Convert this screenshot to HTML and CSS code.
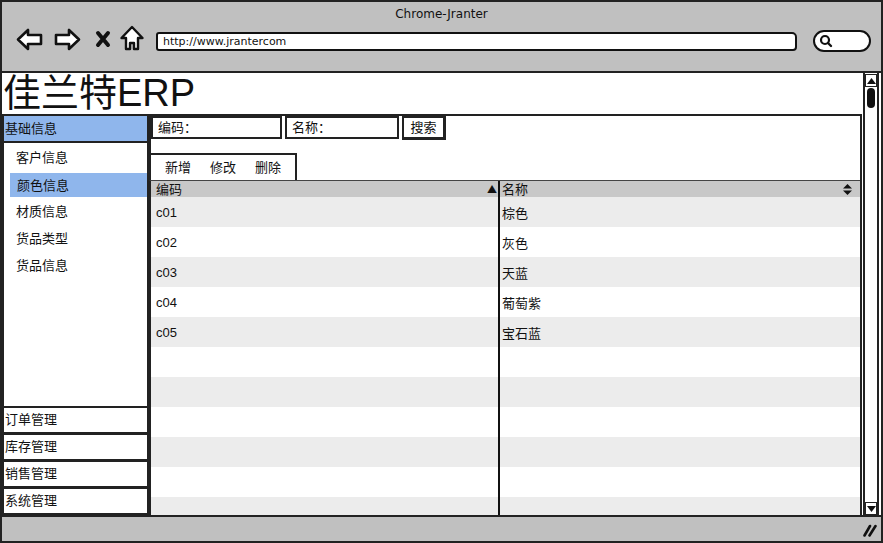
FILE: index.html
```html
<!DOCTYPE html>
<html lang="zh">
<head>
<meta charset="utf-8">
<title>Chrome-Jranter</title>
<link rel="stylesheet" href="styles.css">
</head>
<body>
<div class="window">
  <header class="titlebar">
    <div class="wintitle">Chrome-Jranter</div>
    <div class="navrow">
      <svg class="ic-arrow" width="27" height="23" viewBox="0 0 27 23"><polygon points="2,11.5 12,2 12,7 25,7 25,16 12,16 12,21" fill="#fff" stroke="#111" stroke-width="2.6" stroke-linejoin="round"/></svg>
      <svg class="ic-arrow fwd" width="27" height="23" viewBox="0 0 27 23"><polygon points="25,11.5 15,2 15,7 2,7 2,16 15,16 15,21" fill="#fff" stroke="#111" stroke-width="2.6" stroke-linejoin="round"/></svg>
      <svg class="ic-x" width="16" height="18" viewBox="0 0 16 18"><path d="M3 3 L13 15 M13 3 L3 15" stroke="#111" stroke-width="4" stroke-linecap="round"/></svg>
      <svg class="ic-home" width="24" height="26" viewBox="0 0 24 26"><polygon points="12,2 22.5,13 18,13 18,24 14,24 14,18 10,18 10,24 6,24 6,13 1.5,13" fill="#fff" stroke="#111" stroke-width="2.4" stroke-linejoin="round"/></svg>
      <div class="url">http://www.jrantercom</div>
      <div class="searchpill"><svg width="14" height="14" viewBox="0 0 14 14"><circle cx="6" cy="6" r="4" fill="none" stroke="#111" stroke-width="2.2"/><path d="M9 9 L12 12" stroke="#111" stroke-width="2.4" stroke-linecap="round"/></svg></div>
    </div>
  </header>

  <div class="content">
    <div class="page">
      <h1 class="brand">佳兰特ERP</h1>
      <div class="app">
        <nav class="sidebar">
          <div class="group-head active">基础信息</div>
          <ul class="sub">
            <li>客户信息</li>
            <li class="sel">颜色信息</li>
            <li>材质信息</li>
            <li>货品类型</li>
            <li>货品信息</li>
          </ul>
          <div class="group-head">订单管理</div>
          <div class="group-head">库存管理</div>
          <div class="group-head">销售管理</div>
          <div class="group-head">系统管理</div>
        </nav>
        <section class="main">
          <div class="searchrow">
            <div class="field f-code">编码：</div>
            <div class="field f-name">名称：</div>
            <div class="btn-search">搜索</div>
          </div>
          <div class="spacer"></div>
          <div class="toolbar">
            <span>新增</span><span>修改</span><span>删除</span>
          </div>
          <div class="grid">
            <div class="row head">
              <div class="c1">编码<span class="sort">▲</span></div>
              <div class="c2">名称<svg class="updown" width="9" height="11" viewBox="0 0 9 11"><polygon points="4.5,0 9,4.5 0,4.5" fill="#111"/><polygon points="0,6.5 9,6.5 4.5,11" fill="#111"/></svg></div>
            </div>
            <div class="row"><div class="c1">c01</div><div class="c2">棕色</div></div>
            <div class="row"><div class="c1">c02</div><div class="c2">灰色</div></div>
            <div class="row"><div class="c1">c03</div><div class="c2">天蓝</div></div>
            <div class="row"><div class="c1">c04</div><div class="c2">葡萄紫</div></div>
            <div class="row"><div class="c1">c05</div><div class="c2">宝石蓝</div></div>
            <div class="row"><div class="c1"></div><div class="c2"></div></div>
            <div class="row"><div class="c1"></div><div class="c2"></div></div>
            <div class="row"><div class="c1"></div><div class="c2"></div></div>
            <div class="row"><div class="c1"></div><div class="c2"></div></div>
            <div class="row"><div class="c1"></div><div class="c2"></div></div>
            <div class="row"><div class="c1"></div><div class="c2"></div></div>
          </div>
        </section>
      </div>
    </div>
    <div class="vscroll">
      <div class="sb-btn"><svg width="9" height="6" viewBox="0 0 9 6"><polygon points="4.5,0 9,6 0,6" fill="#111"/></svg></div>
      <div class="sb-track"><div class="sb-thumb"></div></div>
      <div class="sb-btn"><svg width="9" height="6" viewBox="0 0 9 6"><polygon points="0,0 9,0 4.5,6" fill="#111"/></svg></div>
    </div>
  </div>

  <footer class="statusbar">
    <svg class="grip" width="14" height="13" viewBox="0 0 14 13"><path d="M1.5 11.5 L7 2 M6.5 11.5 L12.5 2" stroke="#111" stroke-width="2.6" stroke-linecap="round"/></svg>
  </footer>
</div>
</body>
</html>
```

FILE: styles.css
```css
* { box-sizing: border-box; }
html, body { margin: 0; padding: 0; background: #fff; }
body {
  width: 883px;
  height: 543px;
  overflow: hidden;
  font-family: "Noto Sans CJK SC", "Liberation Sans", sans-serif;
  color: #111;
}
.window {
  width: 883px;
  height: 543px;
  border: 2px solid #222;
  display: flex;
  flex-direction: column;
  background: #fff;
}

/* title bar */
.titlebar {
  height: 71px;
  flex: none;
  background: #c0c0c0;
  border-bottom: 2px solid #222;
}
.wintitle {
  text-align: center;
  font-family: "DejaVu Sans", sans-serif;
  font-size: 12px;
  line-height: 14px;
  padding-top: 5px;
  height: 22px;
}
.navrow {
  display: flex;
  align-items: center;
  padding-left: 14px;
  height: 30px;
}
.navrow svg { flex: none; display: block; }
.ic-arrow { margin-right: 11px; }
.ic-arrow.fwd { margin-right: 14px; }
.ic-x { margin-right: 9px; }
.ic-home { margin-right: 12px; margin-top: -3px; }
.url {
  width: 641px;
  height: 19px;
  margin-top: 4px;
  background: #fff;
  border: 2px solid #111;
  border-radius: 3px 5px 4px 3px;
  font-family: "DejaVu Sans", sans-serif;
  font-size: 11px;
  line-height: 15px;
  padding-left: 5px;
}
.searchpill {
  width: 58px;
  height: 22px;
  margin-left: 16px;
  margin-top: 4px;
  background: #fff;
  border: 2px solid #111;
  border-radius: 11px;
  display: flex;
  align-items: center;
  padding-left: 4px;
}

/* content */
.content {
  flex: 1;
  display: flex;
  min-height: 0;
}
.page {
  flex: 1;
  display: flex;
  flex-direction: column;
  min-width: 0;
}
.brand {
  margin: 0;
  height: 41px;
  flex: none;
  font-family: "Liberation Sans", "Noto Sans CJK SC", sans-serif;
  font-weight: normal;
  font-size: 38px;
  line-height: 40px;
  padding-left: 1px;
  overflow: hidden;
}
.app {
  flex: 1;
  display: flex;
  min-height: 0;
  border-top: 2px solid #222;
}

/* sidebar */
.sidebar {
  width: 147px;
  flex: none;
  display: flex;
  flex-direction: column;
}
.group-head {
  height: 27px;
  flex: none;
  border: 2px solid #222;
  border-top-width: 1px;
  font-size: 13px;
  line-height: 22px;
  padding-left: 1px;
  background: #fff;
}
.group-head.active {
  background: #8fb6ec;
  border-top-width: 0;
  height: 27px;
  line-height: 24px;
}
.sub {
  list-style: none;
  margin: 0;
  padding: 2px 0 0 6px;
  flex: 1;
  border: 2px solid #222;
  border-top: 0;
  border-bottom-width: 1px;
}
.sub li {
  height: 27px;
  line-height: 23px;
  font-size: 13px;
  padding-left: 6px;
}
.sub li.sel {
  background: #8fb6ec;
  height: 24px;
  margin: 1px 0 2px 0;
  line-height: 24px;
  padding-left: 7px;
}

/* main */
.main {
  flex: 1;
  display: flex;
  flex-direction: column;
  min-width: 0;
  border-left: 2px solid #222;
  border-right: 2px solid #222;
}
.searchrow {
  display: flex;
  height: 24px;
  flex: none;
  align-items: flex-start;
}
.field {
  height: 23px;
  border: 2px solid #222;
  font-size: 13px;
  line-height: 18px;
  padding-left: 5px;
  background: #fff;
}
.f-code { width: 131px; }
.f-name { width: 114px; margin-left: 3px; }
.btn-search {
  width: 44px;
  height: 24px;
  margin-left: 3px;
  border: 2px solid #222;
  border-right-width: 3px;
  border-bottom-width: 3px;
  font-size: 13px;
  line-height: 18px;
  text-align: center;
}
.spacer {
  height: 13px;
  flex: none;
}
.toolbar {
  height: 27px;
  flex: none;
  width: 148px;
  margin-left: -2px;
  border: 2px solid #222;
  border-bottom: 0;
  display: flex;
  font-size: 13px;
  line-height: 24px;
  padding-left: 14px;
  gap: 19px;
}
.grid {
  flex: 1;
  min-height: 0;
  overflow: hidden;
  margin-left: -2px;
  border-left: 2px solid #222;
  border-top: 1px solid #444;
}
.row {
  display: flex;
  height: 30px;
  background: #ececec;
}
.row:nth-child(odd) { background: #fff; }
.row.head {
  height: 16px;
  background: #c8c8c8;
  font-size: 13px;
  line-height: 16px;
}
.c1 {
  width: 349px;
  flex: none;
  border-right: 2px solid #111;
  padding-left: 5px;
  font-family: "Liberation Sans", sans-serif;
  font-size: 13px;
  line-height: 31px;
  display: flex;
}
.c2 {
  flex: 1;
  padding-left: 2px;
  font-size: 13px;
  line-height: 31px;
  display: flex;
}
.head .c1, .head .c2 {
  line-height: 16px;
  font-family: "Noto Sans CJK SC", sans-serif;
  align-items: center;
}
.sort {
  margin-left: auto;
  margin-right: 1px;
  font-size: 10px;
  line-height: 16px;
}
.updown { margin-left: auto; margin-right: 8px; }

/* vertical scrollbar */
.vscroll {
  width: 16px;
  flex: none;
  margin-left: 1px;
  margin-right: 2px;
  border-left: 2px solid #222;
  border-right: 2px solid #222;
  display: flex;
  flex-direction: column;
  background: #fff;
}
.sb-btn {
  height: 13px;
  flex: none;
  border: 1.5px solid #222;
  display: flex;
  align-items: center;
  justify-content: center;
  margin: 1px 0 0 0;
}
.sb-track { flex: 1; padding: 1px 0 0 2px; }
.sb-thumb {
  width: 8px;
  height: 20px;
  background: #111;
  border-radius: 4px;
}

/* status bar */
.statusbar {
  height: 26px;
  flex: none;
  background: #c0c0c0;
  border-top: 2px solid #222;
  display: flex;
  justify-content: flex-end;
  align-items: center;
  padding-right: 4px;
}
.grip { display: block; margin-top: 2px; }
```
